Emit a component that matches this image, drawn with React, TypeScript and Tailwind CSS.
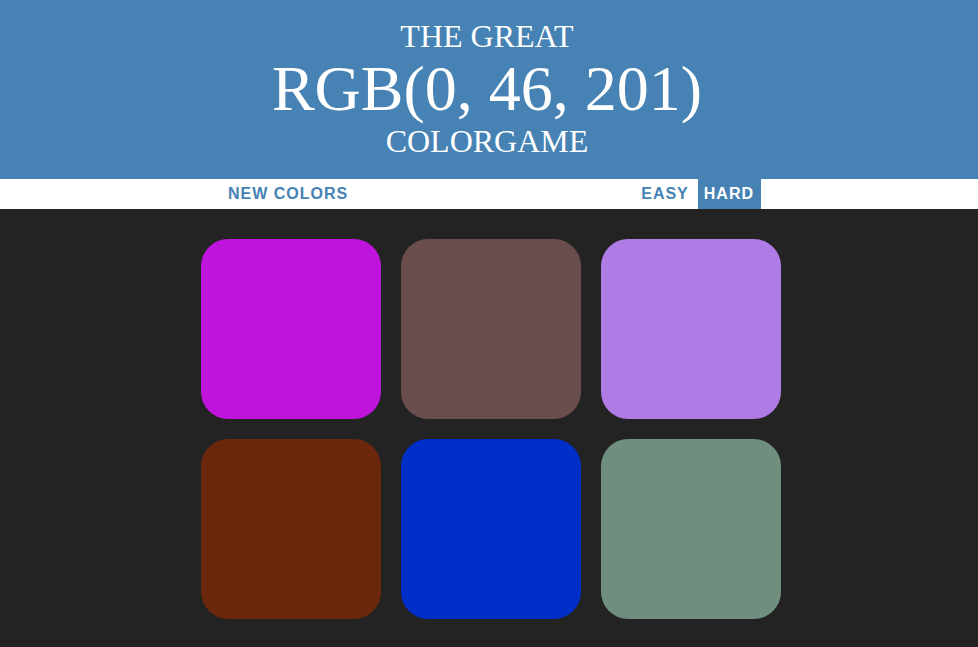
import React from "react";

const colors = ["#BF14DB", "#6A4E4E", "#AF7BE5", "#6B270B", "#002EC9", "#6F8E7E"];

export default function App() {
  return (
    <div className="min-h-[647px] bg-[#232323]">
      <h1 className="bg-[#4682B4] pt-[18px] pb-[20px] pr-[4px] text-center font-normal text-white uppercase" style={{ fontFamily: '"Liberation Serif", serif' }}>
        <div className="text-[32px] leading-[36px]">The Great</div>
        <div className="text-[64px] leading-[69px]">RGB(0, 46, 201)</div>
        <div className="text-[32px] leading-[36px]">Colorgame</div>
      </h1>
      <div className="flex h-[30px] justify-center bg-white pl-[5px] text-[16px] font-bold uppercase tracking-[1px] text-[#4682B4]" style={{ fontFamily: '"Liberation Sans", Arial, sans-serif' }}>
        <button className="h-full px-[6px] uppercase">New Colors</button>
        <div className="w-[281px]" />
        <button className="h-full px-[6px] uppercase">Easy</button>
        <div className="w-[3px]" />
        <button className="h-full bg-[#4682B4] pl-[6px] pr-[7px] uppercase text-white">Hard</button>
      </div>
      <div className="flex justify-center pl-[4px] pt-[30px]">
        <div className="grid w-[580px] grid-cols-3 gap-5">
          {colors.map((c) => (
            <div key={c} className="h-[180px] w-[180px] rounded-[27px]" style={{ background: c }} />
          ))}
        </div>
      </div>
    </div>
  );
}
